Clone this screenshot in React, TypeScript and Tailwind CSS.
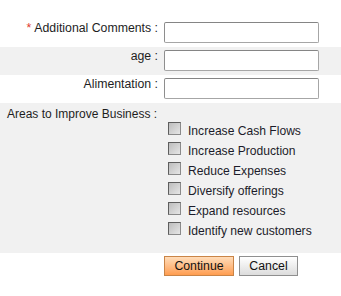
import React from "react";

const font = { fontFamily: '"Liberation Sans", Arial, sans-serif' };

function Field({ label, required, gray }: { label: string; required?: boolean; gray?: boolean }) {
  return (
    <div className={`flex h-[28px] items-start ${gray ? "bg-[#f1f1f1]" : "bg-white"}`}>
      <div className="w-[158px] pt-[2px] text-right text-[12.3px] leading-[14px] text-[#1e1e1e] whitespace-nowrap">
        {required && <span className="text-[#e0362c] mr-[3px]">*</span>}
        {label}
      </div>
      <input
        type="text"
        className="ml-[6px] mt-[3px] h-[21px] w-[155px] rounded-[2px] border border-[#a6a6a6] border-t-[#858585] border-l-[#8e8e8e] bg-white outline-none"
      />
    </div>
  );
}

function Check({ label }: { label: string }) {
  return (
    <div className="flex h-[20px] items-start">
      <span className="mt-[1px] block h-[13px] w-[13px] border border-[#5e5e5e] border-r-[#8a8a8a] border-b-[#8a8a8a] bg-gradient-to-br from-[#bdbdbd] to-[#e6e6e6]" />
      <span className="ml-[7px] pt-[3px] text-[12.1px] leading-[14px] text-[#1c1c2a] whitespace-nowrap">{label}</span>
    </div>
  );
}

export default function App() {
  return (
    <div className="w-[341px] h-[296px] bg-white" style={font}>
      <div className="h-[19px]" />
      <Field label="Additional Comments :" required />
      <Field label="age :" gray />
      <Field label="Alimentation :" />
      <div className="h-[150px] bg-[#f1f1f1] pt-[4px]">
        <div className="pl-[7px] text-[12px] leading-[14px] text-[#1e1e1e]">Areas to Improve Business :</div>
        <div className="pl-[168px]">
          <Check label="Increase Cash Flows" />
          <Check label="Increase Production" />
          <Check label="Reduce Expenses" />
          <Check label="Diversify offerings" />
          <Check label="Expand resources" />
          <Check label="Identify new customers" />
        </div>
      </div>
      <div className="flex gap-[5px] pl-[164px] pt-[3px]">
        <button className="h-[20px] w-[70px] border border-[#c98447] bg-gradient-to-b from-[#ffdcb8] to-[#ff9d4f] text-[12.3px] leading-[14px] text-[#111]">
          Continue
        </button>
        <button className="h-[20px] w-[59px] border border-[#8f8f8f] bg-gradient-to-b from-[#ffffff] to-[#dcdcdc] text-[12.3px] leading-[14px] text-[#111]">
          Cancel
        </button>
      </div>
    </div>
  );
}
